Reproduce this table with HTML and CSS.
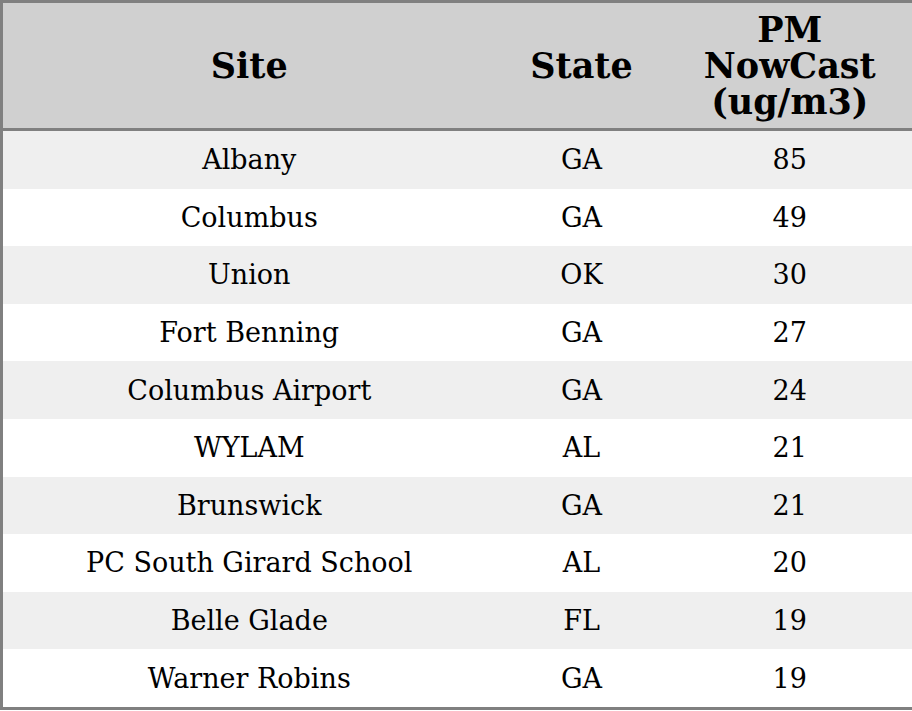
FILE: index.html
```html
<!DOCTYPE html>
<html>
<head>
<meta charset="utf-8">
<link rel="stylesheet" href="styles.css">
</head>
<body>
<table class="aq">
  <colgroup>
    <col class="c-site">
    <col class="c-state">
    <col class="c-pm">
  </colgroup>
  <thead>
    <tr class="head">
      <th>Site</th>
      <th>State</th>
      <th>PM<br>NowCast<br>(ug/m3)</th>
    </tr>
  </thead>
  <tbody>
    <tr><td>Albany</td><td>GA</td><td>85</td></tr>
    <tr><td>Columbus</td><td>GA</td><td>49</td></tr>
    <tr><td>Union</td><td>OK</td><td>30</td></tr>
    <tr><td>Fort Benning</td><td>GA</td><td>27</td></tr>
    <tr><td>Columbus Airport</td><td>GA</td><td>24</td></tr>
    <tr><td>WYLAM</td><td>AL</td><td>21</td></tr>
    <tr><td>Brunswick</td><td>GA</td><td>21</td></tr>
    <tr><td>PC South Girard School</td><td>AL</td><td>20</td></tr>
    <tr><td>Belle Glade</td><td>FL</td><td>19</td></tr>
    <tr><td>Warner Robins</td><td>GA</td><td>19</td></tr>
  </tbody>
</table>
</body>
</html>
```
FILE: styles.css
```css
html, body {
  margin: 0;
  padding: 0;
  background: #ffffff;
}
body {
  font-family: "DejaVu Serif", serif;
  color: #000;
}
.aq {
  width: 912px;
  border-collapse: collapse;
  border: 3px solid #808080;
  table-layout: fixed;
}
.c-site { width: 494px; }
.c-state { width: 172px; }
.c-pm { width: 246px; }
.aq th {
  background: #d0d0d0;
  font-size: 35px;
  font-weight: bold;
  line-height: 36px;
  text-align: center;
  vertical-align: middle;
  padding: 0;
  height: 125px;
  border-bottom: 3px solid #808080;
}
.aq td {
  font-size: 27px;
  text-align: center;
  vertical-align: middle;
  padding: 0;
  height: 57.6px;
}
.aq tbody tr:nth-child(odd) td {
  background: #efefef;
}
```
